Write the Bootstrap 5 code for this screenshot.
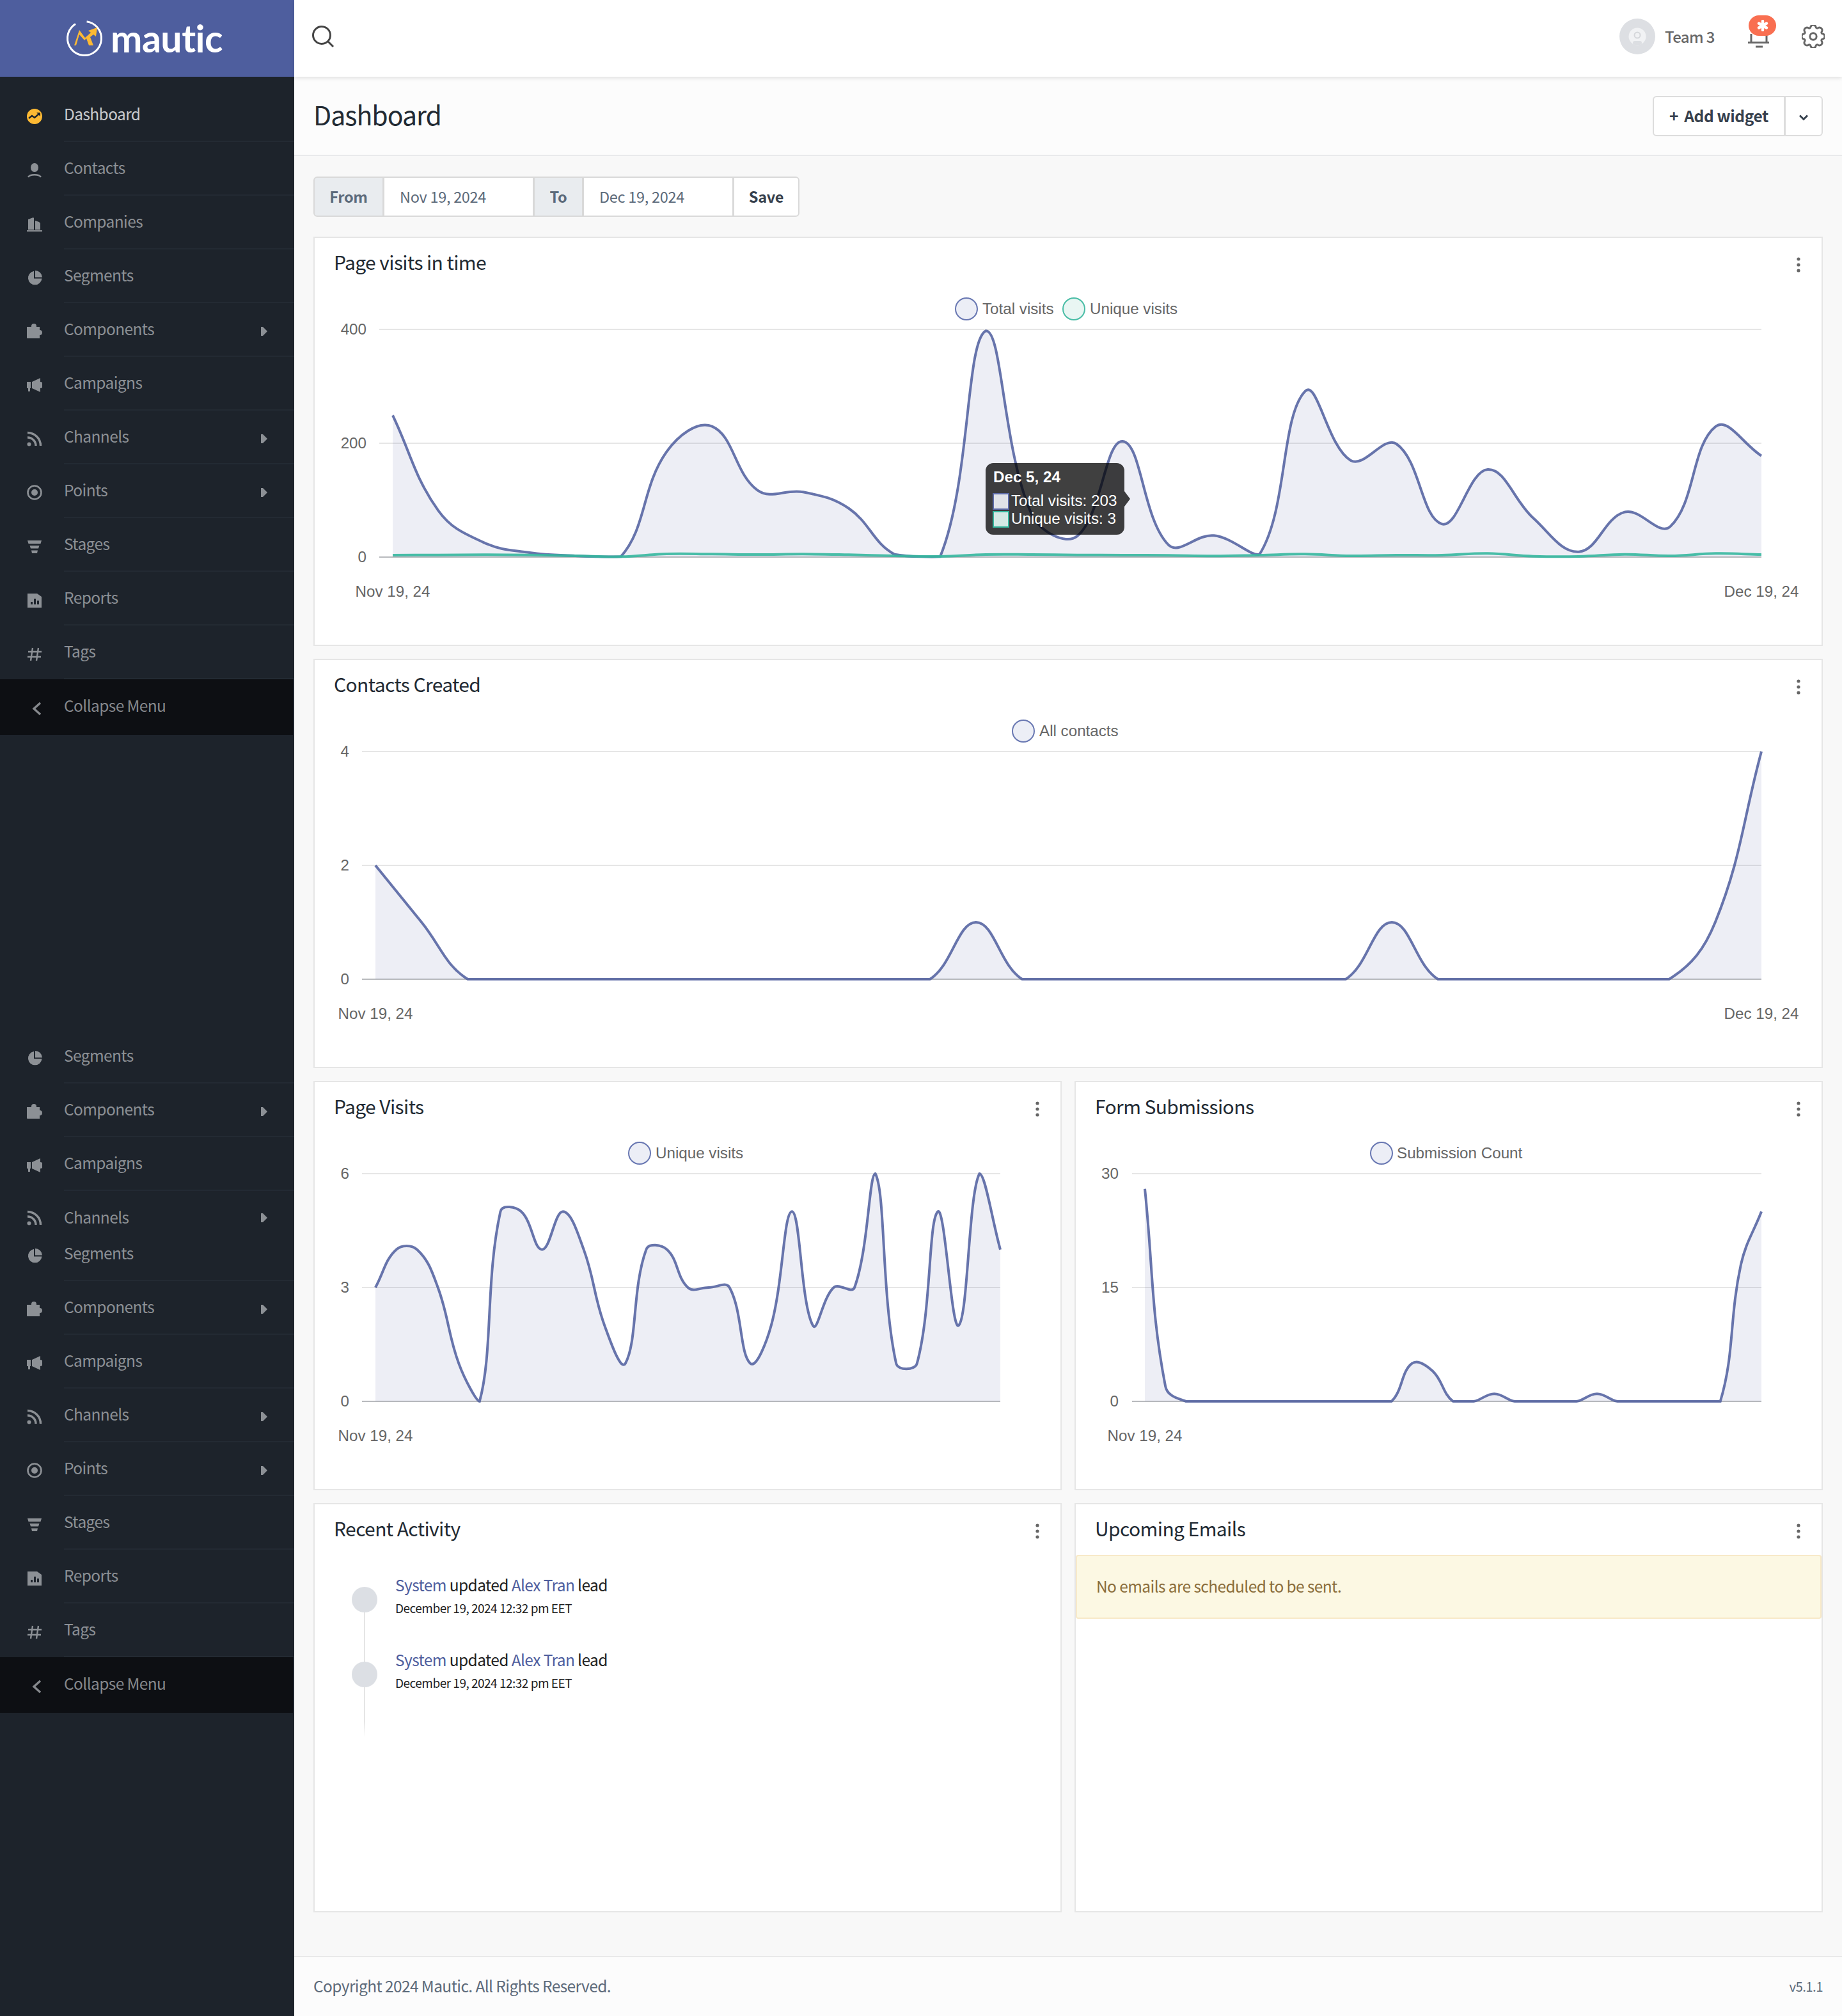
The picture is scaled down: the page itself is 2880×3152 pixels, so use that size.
<!DOCTYPE html>
<html lang="en">
<head>
  <meta charset="UTF-8" />
  <title>Dashboard | Mautic</title>
  <link href="https://cdn.jsdelivr.net/npm/bootstrap@5.3.3/dist/css/bootstrap.min.css" rel="stylesheet" />
  <style>
    body {
      font-family: "Noto Sans CJK SC", "Noto Sans", sans-serif;
      background: #f8f8f8;
      color: #222;
      font-size: 24.5px;
      letter-spacing: -.6px;
    }
    .shell { min-height: 3152px; }
    .side-bar { width: 460px; flex: 0 0 460px; background: #1d232b; }
    .logo-box { height: 120px; background: #4e5e9e; padding-left: 100px; }
    .logo-word { font-family: Lato, sans-serif; font-weight: 700; font-size: 59px; line-height: 60px; color: #fff; letter-spacing: -.5px; margin-left: 9px; }
    .side-list { padding-top: 18px; }
    .side-list-2 { padding-top: 461px; }
    .side-item { height: 84px; color: #8c9095; text-decoration: none; line-height: 36px; }
    .side-item.is-cut { height: 57px; }
    .side-item.is-cut .side-label { border-bottom: 0; }
    .side-item.is-active { color: #c9cbce; }
    .side-icon { width: 100px; flex: 0 0 100px; padding: 4px 0 0 42px; }
    .side-icon svg { width: 24px; height: 24px; display: block; fill: currentColor; }
    .side-label { flex: 1; height: 100%; border-bottom: 2px solid #232a33; padding-right: 42px; padding-bottom: 2px; }
    .side-caret { width: 10px; height: 14px; margin-top: 8px; fill: currentColor; }
    .side-collapse { height: 87px; background: #0d0f13; margin-right: 2px; color: #85888c; }
    .side-collapse .side-label { border: 0; padding-bottom: 5px; }
    .top-bar { height: 120px; background: #fff; box-shadow: 0 2px 6px rgba(0, 0, 0, .12); padding: 0 27px 6px 27px; position: relative; }
    .avatar-pic { width: 56px; height: 56px; }
    .team-name { font-weight: 500; font-size: 24px; color: #666; margin: 0 0 0 15px; line-height: 36px; width: 78px; white-space: nowrap; }
    .bell-wrap { width: 44px; height: 60px; margin: 0 0 0 52px; }
    .bell-badge { position: absolute; left: 1px; top: -3px; width: 43px; height: 32px; border-radius: 16px; background: #f96f51; }
    .gear-pic { width: 36px; height: 36px; margin-left: 40px; }
    .page-head { height: 124px; background: #fcfcfc; border-bottom: 2px solid #e9eaec; padding: 0 30px; }
    .page-title { font-size: 41px; font-weight: 400; line-height: 60px; margin: 0 0 6px; color: #222a33; letter-spacing: -1px; }
    .add-group .btn { background: #fff; border: 2px solid #ddd; color: #36404d; font-weight: 600; font-size: 24.5px; line-height: 36px; height: 63px; letter-spacing: -.4px; white-space: nowrap; }
    .add-group .btn:first-child { padding: 0; width: 207px; }
    .add-group .btn:last-child { width: 60px; padding: 0; }
    .plus-mark { margin-right: 4px; }
    .page-body { padding: 32px 30px 68px; }
    .date-bar { width: 770px; height: 63px; margin-bottom: 31px; }
    .date-bar .input-group-text, .date-bar .form-control, .date-bar .btn { font-size: 23.5px; line-height: 36px; border: 2px solid #d9d9d9; height: 63px; letter-spacing: -.3px; padding-bottom: 2px; }
    .date-bar .input-group-text { background: #e9ecef; color: #5c6a7a; font-weight: 600; padding-top: 0; padding-left: 0; padding-right: 0; justify-content: center; }
    .date-bar .form-control { padding-top: 0; padding-left: 24px; padding-right: 24px; color: #5c6a7a; background: #fff; flex: 0 0 auto; }
    .date-bar .date-cell { width: 236px; }
    .date-bar .from-label { width: 110px; }
    .date-bar .to-label { width: 78px; }
    .date-bar .btn { background: #fff; color: #36404d; font-weight: 600; padding-top: 0; padding-left: 0; padding-right: 0; width: 104px; }
    .tile { height: 640px; border: 2px solid #e6e6e6; border-radius: 0; background: #fff; }
    .tile-row { --bs-gutter-x: 20px; --bs-gutter-y: 20px; }
    .tile-head { height: 68px; padding: 6px 30px 0; }
    .tile-title { font-size: 30px; line-height: 44px; font-weight: 400; margin: 0; color: #222a33; letter-spacing: -.6px; }
    .kebab { width: 6px; height: 24px; fill: #666; margin-top: 9px; margin-right: 3px; }
    .chart-pic { display: block; }
    .chart-pic text { font-family: "Liberation Sans", Arial, sans-serif; font-size: 24.2px; fill: #666; letter-spacing: 0; }
    .chart-pic .grid-line { stroke: #e6e6e6; stroke-width: 2; }
    .chart-pic .zero-line { stroke: #b8babd; stroke-width: 2; }
    .chart-pic .tip-title { font-weight: 700; fill: #fff; }
    .chart-pic .tip-text { fill: #fff; }
    .feed { padding: 40px 30px 0 58px; }
    .feed-item { height: 117px; }
    .feed-item.is-last { height: 139px; }
    .feed-rail { width: 40px; flex: 0 0 40px; margin-right: 28px; background: linear-gradient(#e5e5e5, #e5e5e5) center / 2px 100% no-repeat; }
    .feed-item.is-first .feed-rail { margin-top: 21px; }
    .feed-item.is-last .feed-rail { padding-top: 21px; background: linear-gradient(#e5e5e5 82%, transparent) center / 2px 100% no-repeat; }
    .feed-dot { width: 40px; height: 40px; border-radius: 50%; background: #dcdfe4; }
    .feed-line { line-height: 36px; color: #222; }
    .feed-line a { color: #4e5d9d; text-decoration: none; }
    .feed-date { font-size: 19px; line-height: 36px; color: #222; letter-spacing: -.5px; }
    .empty-note { margin: 11px 0 0; height: 100px; padding: 0 30px 2px; border: 2px solid #f8e9c8; border-radius: 4px; background: #fcf8e3; color: #8a6d3b; line-height: 36px; }
    .page-foot { height: 94px; background: #fcfcfc; border-top: 2px solid #e9e9e9; padding: 0 30px 2px; color: #5c6a7a; line-height: 36px; }
    .foot-version { font-size: 20.5px; }
  </style>
</head>
<body>

  <svg width="0" height="0" class="position-absolute">
    <symbol id="i-dash" viewBox="0 0 24 24"><circle cx="12" cy="12" r="12" fill="#fdb933"/><path d="M3 15l5-4 4 3 7-6" fill="none" stroke="#1d232b" stroke-width="2.4"/><path d="M15 6h6v6z" fill="#1d232b"/></symbol>
    <symbol id="i-user" viewBox="0 0 24 24"><ellipse cx="12" cy="8" rx="6" ry="7"/><path d="M2 23c3-5 17-5 20 0" fill="none" stroke="currentColor" stroke-width="2.4"/></symbol>
    <symbol id="i-company" viewBox="0 0 24 24"><path d="M2 21V5l8-3 1 1v18zM13 21V7l6 2 2 2v10zM0 24v-2h26v2z"/></symbol>
    <symbol id="i-pie" viewBox="0 0 24 24"><path d="M10.5 2a10.8 10.8 0 1 0 13 11.500H11V2z"/><path d="M13 1a11 11 0 0 1 11 10.500H13z"/></symbol>
    <symbol id="i-puzzle" viewBox="0 0 24 24"><path d="M0 5h7V4a4 4 0 0 1 8 0v1h5v5a3.800 3.800 0 0 1 0 8v5H1a1 1 0 0 1-1-1z"/></symbol>
    <symbol id="i-horn" viewBox="0 0 24 24"><path d="M0 7h6v10H5v5H2v-5H0zM8 7l13-6v6a5 5 0 0 1 0 10v6L8 17z"/></symbol>
    <symbol id="i-rss" viewBox="0 0 24 24"><circle cx="3.500" cy="20.500" r="3"/><path d="M1 10a13 13 0 0 1 13 13M1 2.500a20.500 20.500 0 0 1 20.500 20.500" fill="none" stroke="currentColor" stroke-width="3.400"/></symbol>
    <symbol id="i-target" viewBox="0 0 24 24"><circle cx="12" cy="12" r="10.500" fill="none" stroke="currentColor" stroke-width="2.600"/><circle cx="12" cy="12" r="5"/></symbol>
    <symbol id="i-funnel" viewBox="0 0 24 24"><path d="M1 3h22l-1.500 5h-19zM4.500 11h15l-1.500 4.500H6zM7 18.500h10L16 23H8z"/></symbol>
    <symbol id="i-report" viewBox="0 0 24 24"><path fill-rule="evenodd" d="M1 2h15l7 5v17H1zM6 15v4h3v-4zM11 10v9h3v-9zM16 13v6h3v-6z"/></symbol>
    <symbol id="i-hash" viewBox="0 0 24 24"><path d="M9 3 6 23M18 3l-3 20M2 9h21M1 17h21" fill="none" stroke="currentColor" stroke-width="2.400"/></symbol>
    <symbol id="i-back" viewBox="0 0 24 24"><path d="M21 3 11 12l10 9" fill="none" stroke="currentColor" stroke-width="3.400"/></symbol>
    <symbol id="i-caret" viewBox="0 0 10 14"><path d="M0 0h3l7 7-7 7H0z"/></symbol>
    <symbol id="i-kebab" viewBox="0 0 6 24"><circle cx="3" cy="3" r="2.600"/><circle cx="3" cy="12" r="2.600"/><circle cx="3" cy="21" r="2.600"/></symbol>
  </svg>

  <div class="shell d-flex">

    <aside class="side-bar">
      <div class="logo-box d-flex align-items-center">
        <svg width="64" height="64" viewBox="100 28 64 64">
          <circle cx="132" cy="60" r="26.500" fill="none" stroke="#fff" stroke-width="3" stroke-dasharray="128 18" transform="rotate(-40 132 60)"/>
          <path d="M116 71l8-24 9 12 9-8-4-3 14-5-2 14-4-3-5 4 5 13h-7l-4-11-3 3-8-9-5 17z" fill="#fdb933"/>
        </svg>
        <span class="logo-word">mautic</span>
      </div>

      <nav class="side-list nav flex-column">
        <a class="side-item is-active d-flex align-items-center" href="#"><span class="side-icon"><svg><use href="#i-dash"/></svg></span><span class="side-label d-flex align-items-center">Dashboard</span></a>
        <a class="side-item d-flex align-items-center" href="#"><span class="side-icon"><svg><use href="#i-user"/></svg></span><span class="side-label d-flex align-items-center">Contacts</span></a>
        <a class="side-item d-flex align-items-center" href="#"><span class="side-icon"><svg><use href="#i-company"/></svg></span><span class="side-label d-flex align-items-center">Companies</span></a>
        <a class="side-item d-flex align-items-center" href="#"><span class="side-icon"><svg><use href="#i-pie"/></svg></span><span class="side-label d-flex align-items-center">Segments</span></a>
        <a class="side-item d-flex align-items-center" href="#"><span class="side-icon"><svg><use href="#i-puzzle"/></svg></span><span class="side-label d-flex align-items-center justify-content-between">Components<svg class="side-caret"><use href="#i-caret"/></svg></span></a>
        <a class="side-item d-flex align-items-center" href="#"><span class="side-icon"><svg><use href="#i-horn"/></svg></span><span class="side-label d-flex align-items-center">Campaigns</span></a>
        <a class="side-item d-flex align-items-center" href="#"><span class="side-icon"><svg><use href="#i-rss"/></svg></span><span class="side-label d-flex align-items-center justify-content-between">Channels<svg class="side-caret"><use href="#i-caret"/></svg></span></a>
        <a class="side-item d-flex align-items-center" href="#"><span class="side-icon"><svg><use href="#i-target"/></svg></span><span class="side-label d-flex align-items-center justify-content-between">Points<svg class="side-caret"><use href="#i-caret"/></svg></span></a>
        <a class="side-item d-flex align-items-center" href="#"><span class="side-icon"><svg><use href="#i-funnel"/></svg></span><span class="side-label d-flex align-items-center">Stages</span></a>
        <a class="side-item d-flex align-items-center" href="#"><span class="side-icon"><svg><use href="#i-report"/></svg></span><span class="side-label d-flex align-items-center">Reports</span></a>
        <a class="side-item d-flex align-items-center" href="#"><span class="side-icon"><svg><use href="#i-hash"/></svg></span><span class="side-label d-flex align-items-center">Tags</span></a>
        <a class="side-item side-collapse d-flex align-items-center" href="#"><span class="side-icon"><svg><use href="#i-back"/></svg></span><span class="side-label d-flex align-items-center">Collapse Menu</span></a>
      </nav>

      <nav class="side-list-2 nav flex-column">
        <a class="side-item d-flex align-items-center" href="#"><span class="side-icon"><svg><use href="#i-pie"/></svg></span><span class="side-label d-flex align-items-center">Segments</span></a>
        <a class="side-item d-flex align-items-center" href="#"><span class="side-icon"><svg><use href="#i-puzzle"/></svg></span><span class="side-label d-flex align-items-center justify-content-between">Components<svg class="side-caret"><use href="#i-caret"/></svg></span></a>
        <a class="side-item d-flex align-items-center" href="#"><span class="side-icon"><svg><use href="#i-horn"/></svg></span><span class="side-label d-flex align-items-center">Campaigns</span></a>
        <a class="side-item is-cut d-flex" href="#"><span class="side-icon" style="padding-top:30px"><svg><use href="#i-rss"/></svg></span><span class="side-label d-flex justify-content-between" style="padding-top:23px">Channels<svg class="side-caret" style="margin-top:12px"><use href="#i-caret"/></svg></span></a>
        <a class="side-item d-flex align-items-center" href="#"><span class="side-icon"><svg><use href="#i-pie"/></svg></span><span class="side-label d-flex align-items-center">Segments</span></a>
        <a class="side-item d-flex align-items-center" href="#"><span class="side-icon"><svg><use href="#i-puzzle"/></svg></span><span class="side-label d-flex align-items-center justify-content-between">Components<svg class="side-caret"><use href="#i-caret"/></svg></span></a>
        <a class="side-item d-flex align-items-center" href="#"><span class="side-icon"><svg><use href="#i-horn"/></svg></span><span class="side-label d-flex align-items-center">Campaigns</span></a>
        <a class="side-item d-flex align-items-center" href="#"><span class="side-icon"><svg><use href="#i-rss"/></svg></span><span class="side-label d-flex align-items-center justify-content-between">Channels<svg class="side-caret"><use href="#i-caret"/></svg></span></a>
        <a class="side-item d-flex align-items-center" href="#"><span class="side-icon"><svg><use href="#i-target"/></svg></span><span class="side-label d-flex align-items-center justify-content-between">Points<svg class="side-caret"><use href="#i-caret"/></svg></span></a>
        <a class="side-item d-flex align-items-center" href="#"><span class="side-icon"><svg><use href="#i-funnel"/></svg></span><span class="side-label d-flex align-items-center">Stages</span></a>
        <a class="side-item d-flex align-items-center" href="#"><span class="side-icon"><svg><use href="#i-report"/></svg></span><span class="side-label d-flex align-items-center">Reports</span></a>
        <a class="side-item d-flex align-items-center" href="#"><span class="side-icon"><svg><use href="#i-hash"/></svg></span><span class="side-label d-flex align-items-center">Tags</span></a>
        <a class="side-item side-collapse d-flex align-items-center" href="#"><span class="side-icon"><svg><use href="#i-back"/></svg></span><span class="side-label d-flex align-items-center">Collapse Menu</span></a>
      </nav>
    </aside>

    <div class="flex-grow-1 d-flex flex-column">
      <header class="top-bar d-flex align-items-center justify-content-between">
        <svg width="36" height="36" viewBox="0 0 36 36" fill="none" stroke="#444" stroke-width="3"><circle cx="16" cy="16" r="13.500"/><path d="M26 26l8 8"/></svg>
        <div class="d-flex align-items-center">
          <svg class="avatar-pic" viewBox="0 0 56 56"><circle cx="28" cy="28" r="28" fill="#dddfe3"/><circle cx="28" cy="28" r="13.500" fill="#f1f2f4"/><circle cx="28" cy="26" r="4.500" fill="none" stroke="#d5d7db" stroke-width="2"/><rect x="21" y="35" width="14" height="6" rx="3" fill="#dcdee2"/></svg>
          <span class="team-name">Team 3</span>
          <div class="bell-wrap position-relative">
            <svg width="36" height="60" viewBox="0 0 36 60" fill="none" stroke="#666" stroke-width="3" class="d-block"><path d="M5 26v13M29 26v13M0 39.500h33M12 46h11"/></svg>
            <span class="bell-badge d-flex align-items-center justify-content-center">
              <svg width="18" height="18" viewBox="0 0 18 18" stroke="#fff" stroke-width="4.400" stroke-linecap="round"><path d="M9 2v14M3 5.500l12 7M15 5.500l-12 7"/></svg>
            </span>
          </div>
          <svg class="gear-pic" viewBox="0 0 16 16" fill="none" stroke="#666" stroke-width="1.300"><circle cx="8" cy="8" r="2.300"/><path d="M9.796 1.343c-.527-1.790-3.065-1.790-3.592 0l-.094.319a.873.873 0 0 1-1.255.52l-.292-.16c-1.640-.892-3.433.902-2.540 2.541l.159.292a.873.873 0 0 1-.52 1.255l-.319.094c-1.790.527-1.790 3.065 0 3.592l.319.094a.873.873 0 0 1 .52 1.255l-.16.292c-.892 1.640.901 3.434 2.541 2.540l.292-.159a.873.873 0 0 1 1.255.52l.094.319c.527 1.790 3.065 1.790 3.592 0l.094-.319a.873.873 0 0 1 1.255-.52l.292.16c1.640.893 3.434-.902 2.540-2.541l-.159-.292a.873.873 0 0 1 .52-1.255l.319-.094c1.790-.527 1.790-3.065 0-3.592l-.319-.094a.873.873 0 0 1-.52-1.255l.16-.292c.893-1.640-.902-3.433-2.541-2.540l-.292.159a.873.873 0 0 1-1.255-.52z"/></svg>
        </div>
      </header>

      <div class="page-head d-flex align-items-center justify-content-between">
        <h1 class="page-title">Dashboard</h1>
        <div class="btn-group add-group">
          <button type="button" class="btn"><span class="plus-mark">+</span> Add widget</button>
          <button type="button" class="btn" aria-label="More">
            <svg width="16" height="10" viewBox="0 0 16 10" fill="none" stroke="#36404d" stroke-width="3"><path d="M2 1.500l6 6 6-6"/></svg>
          </button>
        </div>
      </div>

      <main class="page-body flex-grow-1">
        <form class="input-group date-bar">
          <span class="input-group-text from-label">From</span>
          <input type="text" class="form-control date-cell" value="Nov 19, 2024" />
          <span class="input-group-text to-label">To</span>
          <input type="text" class="form-control date-cell" value="Dec 19, 2024" />
          <button type="button" class="btn">Save</button>
        </form>

        <div class="row tile-row">
          <div class="col-12">
            <div class="card tile">
              <div class="tile-head d-flex align-items-center justify-content-between">
                <h3 class="tile-title">Page visits in time</h3>
                <svg class="kebab"><use href="#i-kebab"/></svg>
              </div>
              <svg id="chart-visits" class="chart-pic" width="2356" height="568" viewBox="492 440 2356 568">
                <line class="grid-line" x1="593" y1="515" x2="2754" y2="515"/>
                <line class="grid-line" x1="593" y1="693" x2="2754" y2="693"/>
                <line class="zero-line" x1="593" y1="871" x2="2754" y2="871"/>
                <text x="573" y="523" text-anchor="end">400</text>
                <text x="573" y="701" text-anchor="end">200</text>
                <text x="573" y="879" text-anchor="end">0</text>
                <text x="614" y="933" text-anchor="middle">Nov 19, 24</text>
                <text x="2754" y="933" text-anchor="middle">Dec 19, 24</text>
                <circle cx="1511" cy="483" r="17" fill="#eceef6" stroke="#6877b2" stroke-width="2"/>
                <text x="1536" y="491">Total visits</text>
                <circle cx="1679" cy="483" r="17" fill="#e9f6f3" stroke="#4abda6" stroke-width="2"/>
                <text x="1704" y="491">Unique visits</text>
                <g class="lines"></g>
                <path d="M1541 736a12 12 0 0 1 12-12h193a12 12 0 0 1 12 12v32l9 12-9 12v32a12 12 0 0 1-12 12h-193a12 12 0 0 1-12-12z" fill="rgba(0,0,0,.75)"/>
                <text class="tip-title" x="1553" y="754">Dec 5, 24</text>
                <rect x="1553" y="772" width="24" height="24" fill="#e0e2e8" stroke="#5d6ba8" stroke-width="2"/>
                <rect x="1553" y="800" width="24" height="24" fill="#d4e9e5" stroke="#35b79e" stroke-width="2"/>
                <text class="tip-text" x="1581" y="791">Total visits: 203</text>
                <text class="tip-text" x="1581" y="819">Unique visits: 3</text>
              </svg>
            </div>
          </div>

          <div class="col-12">
            <div class="card tile">
              <div class="tile-head d-flex align-items-center justify-content-between">
                <h3 class="tile-title">Contacts Created</h3>
                <svg class="kebab"><use href="#i-kebab"/></svg>
              </div>
              <svg id="chart-contacts" class="chart-pic" width="2356" height="568" viewBox="492 1100 2356 568">
                <line class="grid-line" x1="566" y1="1175" x2="2754" y2="1175"/>
                <line class="grid-line" x1="566" y1="1353" x2="2754" y2="1353"/>
                <line class="zero-line" x1="566" y1="1531" x2="2754" y2="1531"/>
                <text x="546" y="1183" text-anchor="end">4</text>
                <text x="546" y="1361" text-anchor="end">2</text>
                <text x="546" y="1539" text-anchor="end">0</text>
                <text x="587" y="1593" text-anchor="middle">Nov 19, 24</text>
                <text x="2754" y="1593" text-anchor="middle">Dec 19, 24</text>
                <circle cx="1600" cy="1143" r="17" fill="#eceef6" stroke="#6877b2" stroke-width="2"/>
                <text x="1625" y="1151">All contacts</text>
                <g class="lines"></g>
              </svg>
            </div>
          </div>

          <div class="col-6">
            <div class="card tile">
              <div class="tile-head d-flex align-items-center justify-content-between">
                <h3 class="tile-title">Page Visits</h3>
                <svg class="kebab"><use href="#i-kebab"/></svg>
              </div>
              <svg id="chart-pages" class="chart-pic" width="1166" height="568" viewBox="492 1760 1166 568">
                <line class="grid-line" x1="566" y1="1835" x2="1564" y2="1835"/>
                <line class="grid-line" x1="566" y1="2013" x2="1564" y2="2013"/>
                <line class="zero-line" x1="566" y1="2191" x2="1564" y2="2191"/>
                <text x="546" y="1843" text-anchor="end">6</text>
                <text x="546" y="2021" text-anchor="end">3</text>
                <text x="546" y="2199" text-anchor="end">0</text>
                <text x="587" y="2253" text-anchor="middle">Nov 19, 24</text>
                <circle cx="1000" cy="1803" r="17" fill="#eceef6" stroke="#6877b2" stroke-width="2"/>
                <text x="1025" y="1811">Unique visits</text>
                <g class="lines"></g>
              </svg>
            </div>
          </div>

          <div class="col-6">
            <div class="card tile">
              <div class="tile-head d-flex align-items-center justify-content-between">
                <h3 class="tile-title">Form Submissions</h3>
                <svg class="kebab"><use href="#i-kebab"/></svg>
              </div>
              <svg id="chart-forms" class="chart-pic" width="1166" height="568" viewBox="1682 1760 1166 568">
                <line class="grid-line" x1="1770" y1="1835" x2="2754" y2="1835"/>
                <line class="grid-line" x1="1770" y1="2013" x2="2754" y2="2013"/>
                <line class="zero-line" x1="1770" y1="2191" x2="2754" y2="2191"/>
                <text x="1749" y="1843" text-anchor="end">30</text>
                <text x="1749" y="2021" text-anchor="end">15</text>
                <text x="1749" y="2199" text-anchor="end">0</text>
                <text x="1790" y="2253" text-anchor="middle">Nov 19, 24</text>
                <circle cx="2160" cy="1803" r="17" fill="#eceef6" stroke="#6877b2" stroke-width="2"/>
                <text x="2184" y="1811">Submission Count</text>
                <g class="lines"></g>
              </svg>
            </div>
          </div>

          <div class="col-6">
            <div class="card tile">
              <div class="tile-head d-flex align-items-center justify-content-between">
                <h3 class="tile-title">Recent Activity</h3>
                <svg class="kebab"><use href="#i-kebab"/></svg>
              </div>
              <div class="feed">
                <div class="feed-item is-first d-flex">
                  <div class="feed-rail"><div class="feed-dot"></div></div>
                  <div>
                    <div class="feed-line"><a href="#">System</a> updated <a href="#">Alex Tran</a> lead</div>
                    <div class="feed-date">December 19, 2024 12:32 pm EET</div>
                  </div>
                </div>
                <div class="feed-item is-last d-flex">
                  <div class="feed-rail"><div class="feed-dot"></div></div>
                  <div>
                    <div class="feed-line"><a href="#">System</a> updated <a href="#">Alex Tran</a> lead</div>
                    <div class="feed-date">December 19, 2024 12:32 pm EET</div>
                  </div>
                </div>
              </div>
            </div>
          </div>

          <div class="col-6">
            <div class="card tile">
              <div class="tile-head d-flex align-items-center justify-content-between">
                <h3 class="tile-title">Upcoming Emails</h3>
                <svg class="kebab"><use href="#i-kebab"/></svg>
              </div>
              <div class="alert empty-note d-flex align-items-center">No emails are scheduled to be sent.</div>
            </div>
          </div>
        </div>
      </main>

      <footer class="page-foot d-flex align-items-center justify-content-between">
        <span>Copyright 2024 Mautic. All Rights Reserved.</span>
        <span class="foot-version">v5.1.1</span>
      </footer>
    </div>
  </div>

  <script src="https://cdn.jsdelivr.net/npm/bootstrap@5.3.3/dist/js/bootstrap.bundle.min.js"></script>
  <script>
    // same spline the original chart library uses (tension .4, clamped to the chart area)
    function splinePath(pts, top, bottom) {
      const t = 0.4;
      const ctrl = pts.map((p, i) => {
        const a = pts[i - 1] || p, b = pts[i + 1] || p;
        const d01 = Math.hypot(p.x - a.x, p.y - a.y), d12 = Math.hypot(b.x - p.x, b.y - p.y);
        const s = d01 + d12 || 1;
        const fa = t * d01 / s, fb = t * d12 / s;
        const clamp = v => Math.min(bottom, Math.max(top, v));
        return {
          px: p.x - fa * (b.x - a.x), py: clamp(p.y - fa * (b.y - a.y)),
          nx: p.x + fb * (b.x - a.x), ny: clamp(p.y + fb * (b.y - a.y))
        };
      });
      let d = 'M' + pts[0].x + ' ' + pts[0].y;
      for (let i = 1; i < pts.length; i++) {
        d += 'C' + ctrl[i - 1].nx + ' ' + ctrl[i - 1].ny + ' ' + ctrl[i].px + ' ' + ctrl[i].py + ' ' + pts[i].x + ' ' + pts[i].y;
      }
      return d;
    }

    function addSeries(id, x0, x1, top, bottom, ys, stroke, fill) {
      const g = document.querySelector('#' + id + ' .lines');
      const step = (x1 - x0) / (ys.length - 1);
      const pts = ys.map((y, i) => ({ x: x0 + step * i, y: y }));
      const d = splinePath(pts, top, bottom);
      const mk = (dd, attrs) => {
        const el = document.createElementNS('http://www.w3.org/2000/svg', 'path');
        el.setAttribute('d', dd);
        Object.keys(attrs).forEach(k => el.setAttribute(k, attrs[k]));
        g.appendChild(el);
      };
      if (fill) mk(d + 'L' + x1 + ' ' + bottom + 'L' + x0 + ' ' + bottom + 'Z', { fill: fill });
      mk(d, { fill: 'none', stroke: stroke, 'stroke-width': 4 });
    }

    const BLUE = 'rgba(78,93,157,.85)', AREA = 'rgba(78,93,157,.1)', GREEN = 'rgba(53,183,158,.9)';
    const scale = (vals, max, top, bottom) => vals.map(v => bottom - v / max * (bottom - top));

    // first chart: read off the picture in pixels above its top edge (440), at 1/3 scale
    const px = a => a.map(v => 440 + v / 3);
    addSeries('chart-visits', 614, 2754, 515, 871, px([628, 1075, 1225, 1272, 1287, 1291, 800, 680, 980, 988, 1065, 1280, 1291, 232, 1090, 1195, 750, 1235, 1192, 1280, 515, 840, 762, 1138, 882, 1110, 1268, 1082, 1150, 680, 818]), BLUE, AREA);
    addSeries('chart-visits', 614, 2754, 515, 871, px([1284, 1283, 1282, 1283, 1287, 1291, 1278, 1279, 1281, 1279, 1282, 1287, 1290, 1281, 1281, 1283, 1284, 1285, 1288, 1284, 1279, 1287, 1284, 1284, 1276, 1289, 1290, 1280, 1287, 1276, 1281]), GREEN);

    addSeries('chart-contacts', 587, 2754, 1175, 1531, scale([2, 1, 0, 0, 0, 0, 0, 0, 0, 0, 0, 0, 0, 1, 0, 0, 0, 0, 0, 0, 0, 0, 1, 0, 0, 0, 0, 0, 0, 1, 4], 4, 1175, 1531), BLUE, AREA);
    addSeries('chart-pages', 587, 1564, 1835, 2191, scale([3, 4, 4, 3, 1, 0, 5, 5, 4, 5, 4, 2, 1, 4, 4, 3, 3, 3, 1, 2, 5, 2, 3, 3, 6, 1, 1, 5, 2, 6, 4], 6, 1835, 2191), BLUE, AREA);
    addSeries('chart-forms', 1790, 2754, 1835, 2191, scale([28, 2, 0, 0, 0, 0, 0, 0, 0, 0, 0, 0, 0, 5, 4, 0, 0, 1, 0, 0, 0, 0, 1, 0, 0, 0, 0, 0, 0, 18, 25], 30, 1835, 2191), BLUE, AREA);
  </script>
</body>
</html>
